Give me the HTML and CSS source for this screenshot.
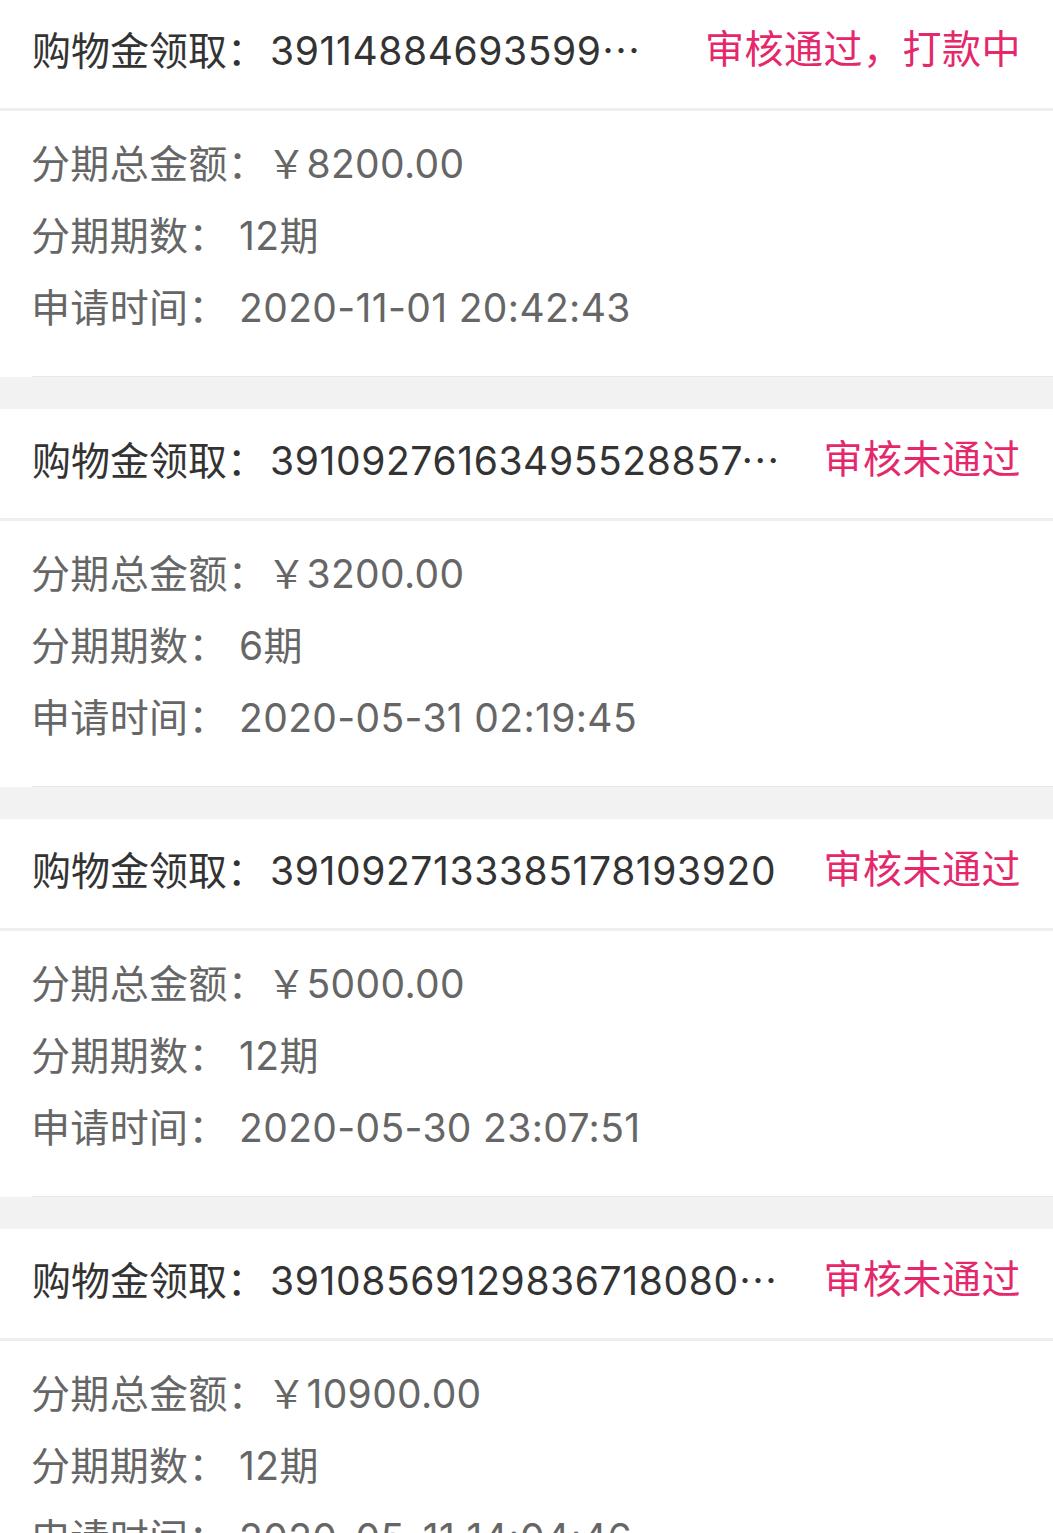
FILE: index.html
```html
<!DOCTYPE HTML>
<html>

<head>
  <title>购物金领取记录</title>
  <meta name="viewport" content="width=device-width, initial-scale=1.0">
  <link rel="stylesheet" href="styles.css">
</head>

<body>
  <div class="list">

    <!-- ------------------------------------------------------------------ -->

    <div class="item">
      <div class="item-head">
        <span class="order">购物金领取：<span class="num">39114884693599837104</span></span>
        <span class="status">审核通过，打款中</span>
      </div>
      <div class="item-body">
        <p>分期总金额：￥8200.00</p>
        <p>分期期数：&nbsp;12期</p>
        <p>申请时间：&nbsp;2020-11-01 20:42:43</p>
      </div>
    </div>

    <!-- ------------------------------------------------------------------ -->

    <div class="item">
      <div class="item-head">
        <span class="order">购物金领取：<span class="num">39109276163495528857426</span></span>
        <span class="status">审核未通过</span>
      </div>
      <div class="item-body">
        <p>分期总金额：￥3200.00</p>
        <p>分期期数：&nbsp;6期</p>
        <p>申请时间：&nbsp;2020-05-31 02:19:45</p>
      </div>
    </div>

    <!-- ------------------------------------------------------------------ -->

    <div class="item">
      <div class="item-head">
        <span class="order">购物金领取：<span class="num">3910927133385178193920</span></span>
        <span class="status">审核未通过</span>
      </div>
      <div class="item-body">
        <p>分期总金额：￥5000.00</p>
        <p>分期期数：&nbsp;12期</p>
        <p>申请时间：&nbsp;2020-05-30 23:07:51</p>
      </div>
    </div>

    <!-- ------------------------------------------------------------------ -->

    <div class="item">
      <div class="item-head">
        <span class="order">购物金领取：<span class="num">39108569129836718080551</span></span>
        <span class="status">审核未通过</span>
      </div>
      <div class="item-body">
        <p>分期总金额：￥10900.00</p>
        <p>分期期数：&nbsp;12期</p>
        <p>申请时间：&nbsp;2020-05-11 14:04:46</p>
      </div>
    </div>

  </div>
</body>

</html>
```

FILE: styles.css
```css
html {
  font-family: Inter, "Noto Sans CJK SC", sans-serif;
}

body {
  margin: 0px;
  background-color: #F2F2F2;
}

p {
  margin: 0px;
}

/* -------------------------------- LIST ------------------------------- */

.list {
  margin-top: -1px;
}

.item {
  margin-bottom: 32px;
  background-color: white;
}

/* ------------------------------- HEADER ------------------------------ */

.item-head {
  display: flex;
  align-items: center;
  height: 56px;
  padding: 22px 32px 31px 32px;
  border-bottom: 3px solid #EEEEEE;
  font-size: 39px;
  line-height: 56px;
}

/* CJK font first so the ellipsis is drawn as centred dots */
.order {
  flex: 1;
  min-width: 0;
  overflow: hidden;
  white-space: nowrap;
  text-overflow: ellipsis;
  font-family: "Noto Sans CJK SC", sans-serif;
  color: #333333;
}

.num {
  margin-left: 4px;
  font-family: Inter, sans-serif;
  letter-spacing: 0.6px;
}

.status {
  flex-shrink: 0;
  margin-left: 42px;
  letter-spacing: 0.5px;
  color: #E4286B;
}

/* -------------------------------- BODY ------------------------------- */

.item-body {
  margin-left: 32px;
  padding: 17px 0px 32px 0px;
  border-bottom: 1px solid #E8E8E8;
  font-size: 39px;
  line-height: 72px;
  letter-spacing: 0.35px;
  color: #666666;
}

.item-body p {
  margin-left: -1px;
}
```
